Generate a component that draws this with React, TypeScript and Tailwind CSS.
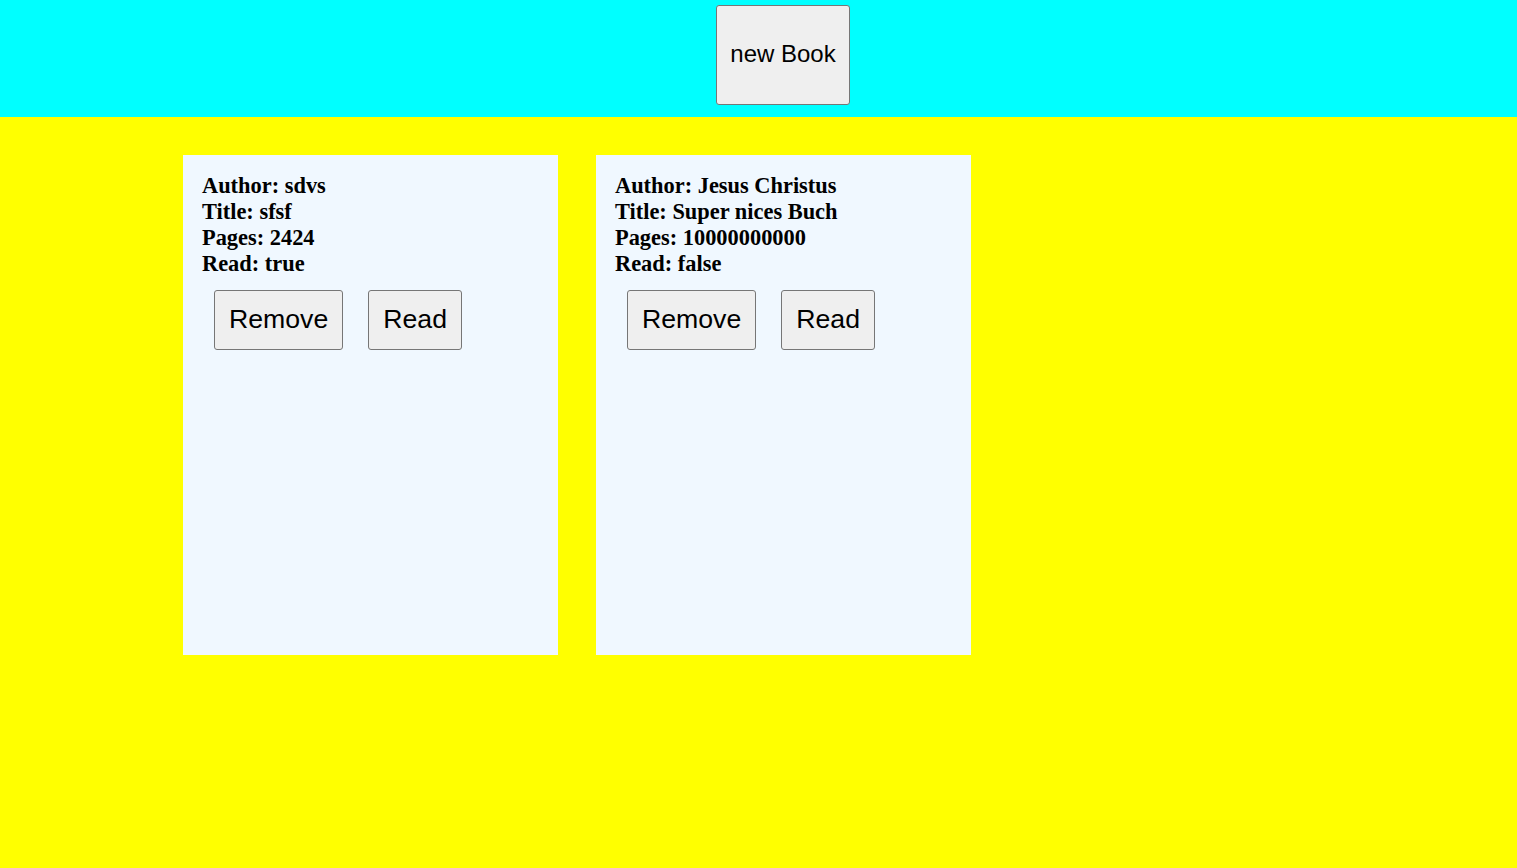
const books = [
  { author: "sdvs", title: "sfsf", pages: "2424", read: "true" },
  { author: "Jesus Christus", title: "Super nices Buch", pages: "10000000000", read: "false" },
];

const btn =
  "bg-[#efefef] border border-[#767676] rounded-[3px] text-black font-['Liberation_Sans',Arial,sans-serif]";

const BookCard = ({ book }: { book: (typeof books)[number] }) => {
  return (
    <div className="w-[375px] h-[500px] bg-[#f0f8ff] pl-[19px] pr-[19px] pt-[18px]">
      <div className="font-['Liberation_Serif','Times_New_Roman',serif] font-bold text-[22.4px] leading-[26px] text-black">
        <p>Author: {book.author}</p>
        <p>Title: {book.title}</p>
        <p>Pages: {book.pages}</p>
        <p>Read: {book.read}</p>
      </div>
      <div className="flex flex-row mt-[13px] ml-[12px] gap-[25px]">
        <button className={btn + " text-[26.67px] leading-[30px] px-[14px] pt-[13px] pb-[15px]"}>Remove</button>
        <button className={btn + " text-[26.67px] leading-[30px] px-[14px] pt-[13px] pb-[15px]"}>Read</button>
      </div>
    </div>
  );
};

const App = () => {
  return (
    <div className="min-h-[868px] bg-[#ffff00] flex flex-col">
      <header className="h-[117px] bg-[#00ffff] flex flex-row justify-center items-start pt-[5px]">
        <button className={btn + " h-[100px] px-[13.5px] text-[24px] leading-[26px] pb-[2px] ml-[49px]"}>new Book</button>
      </header>
      <main className="flex flex-row gap-[38px] pl-[183px] pt-[38px]">
        {books.map((b, i) => (
          <BookCard key={i} book={b} />
        ))}
      </main>
    </div>
  );
};

export default App;
